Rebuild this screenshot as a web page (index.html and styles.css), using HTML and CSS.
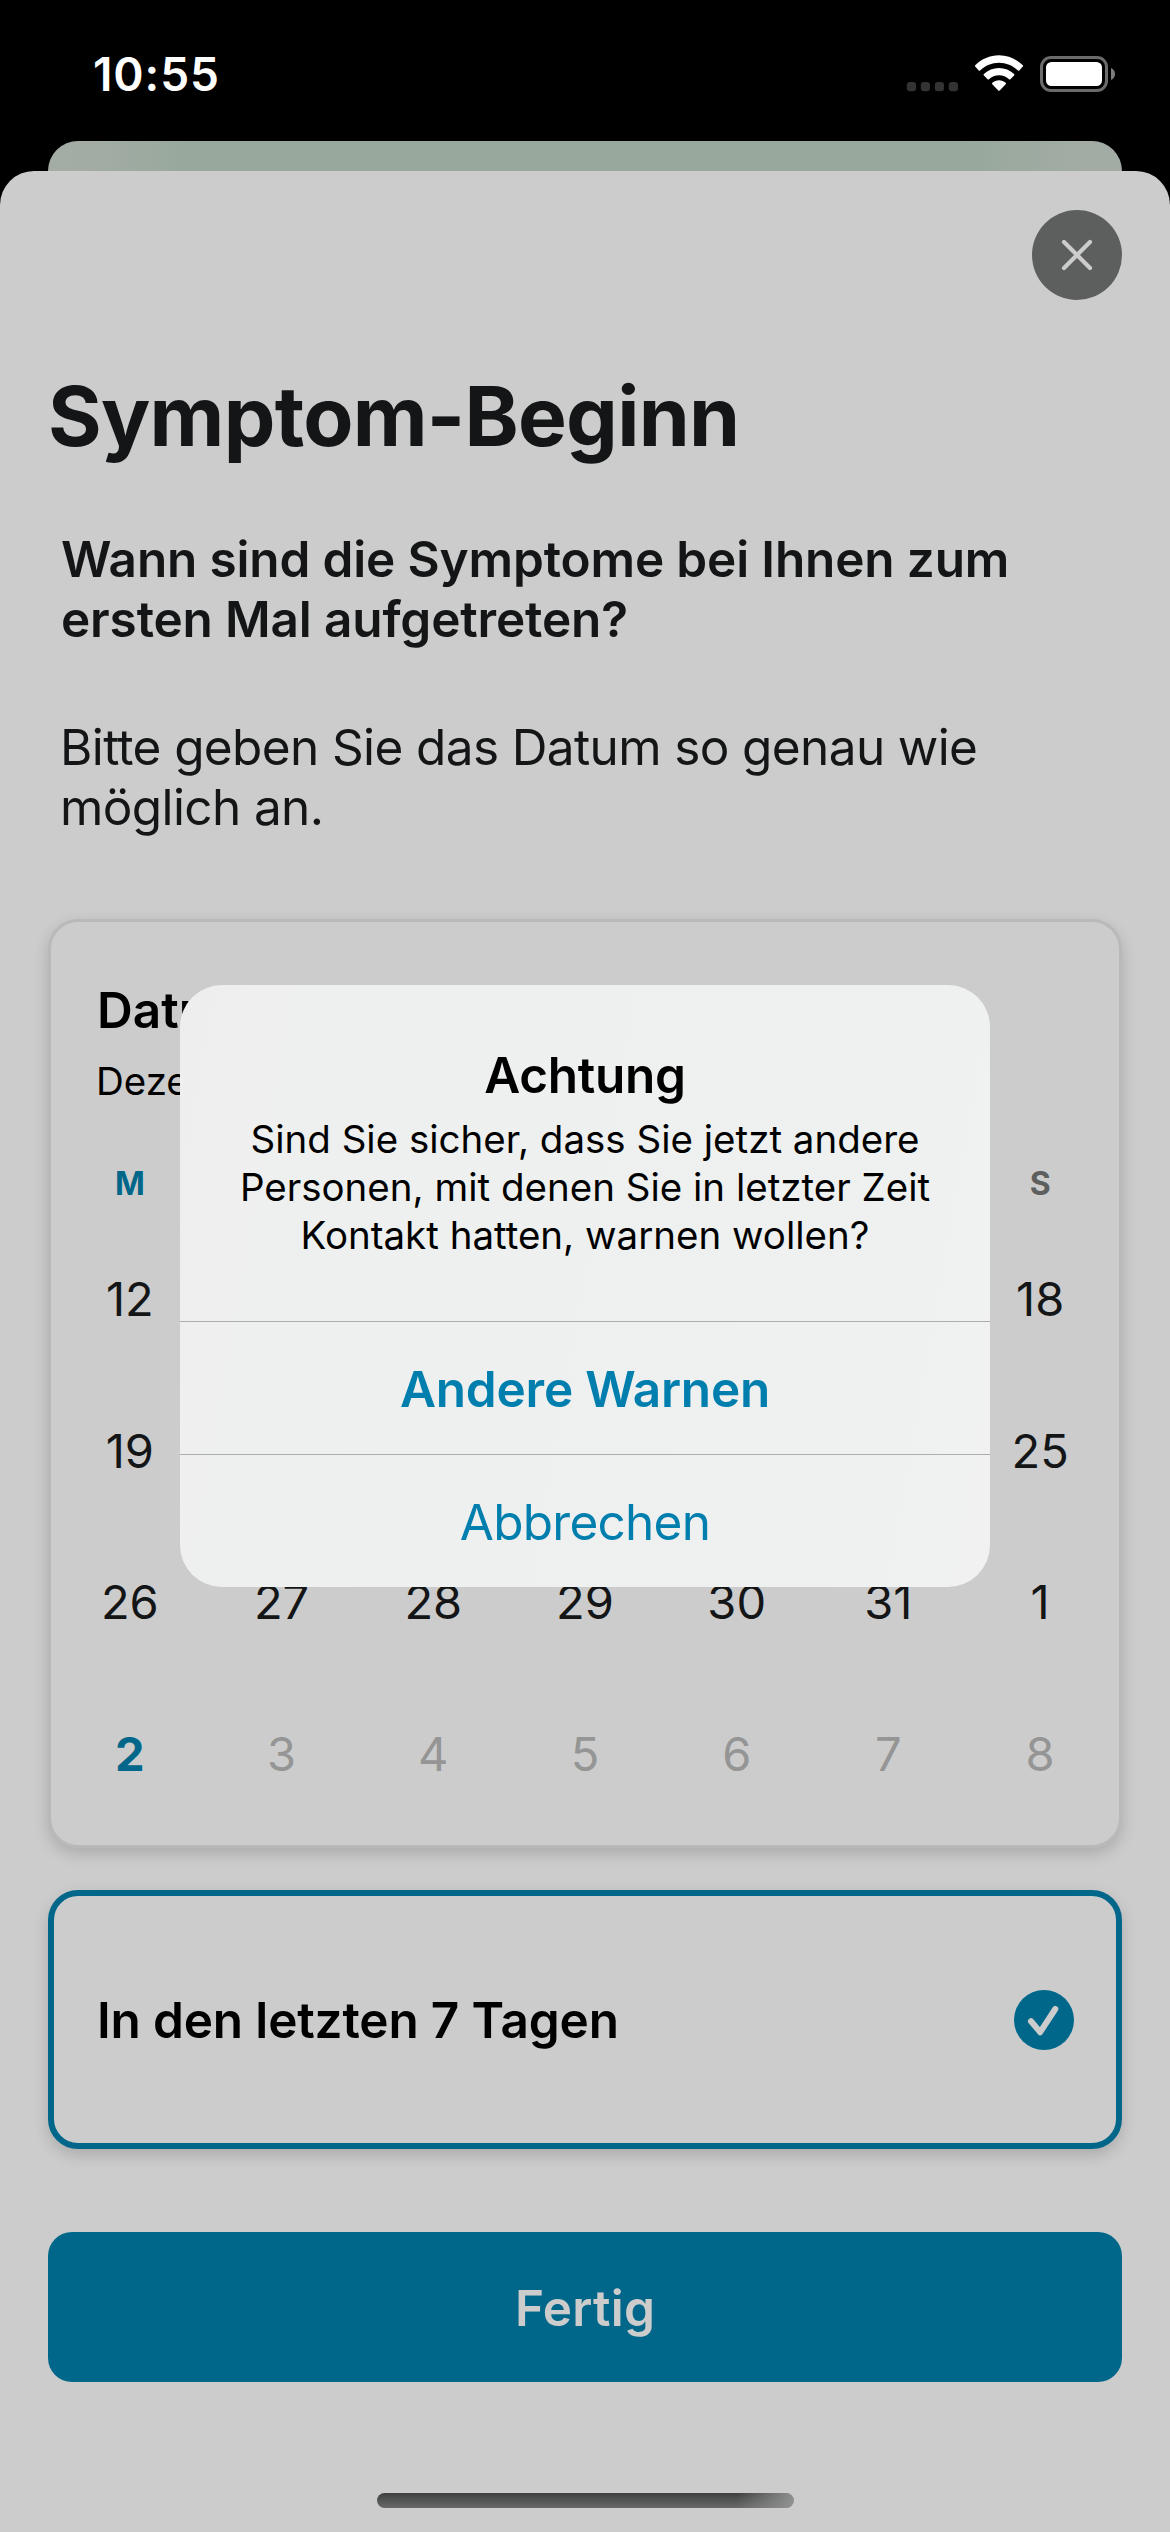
FILE: index.html
```html
<!DOCTYPE html>
<html lang="de">
<head>
<meta charset="utf-8">
<title>Symptom-Beginn</title>
<link rel="stylesheet" href="styles.css">
</head>
<body>
<div class="screen">
  <header class="status-bar">
    <span class="time">10:55</span>
    <div class="status-icons">
      <svg class="signal" width="52" height="10" viewBox="0 0 52 10" fill="#333">
        <rect x="0.8" y="0" width="9.2" height="9.2" rx="3"/>
        <rect x="14.8" y="0" width="9.2" height="9.2" rx="3"/>
        <rect x="28.8" y="0" width="9.2" height="9.2" rx="3"/>
        <rect x="42.8" y="0" width="9.2" height="9.2" rx="3"/>
      </svg>
      <svg class="wifi" width="50" height="37" viewBox="0 0 50 37" fill="#fff">
        <path d="M25 .3C34 .3 42.500 4 48.800 10.200a1 1 0 0 1 0 1.400L45.300 15.400a1 1 0 0 1-1.400 0C38.800 10.500 32 7.700 25 7.700S11.200 10.500 6.100 15.400a1 1 0 0 1-1.400 0L1.200 11.600a1 1 0 0 1 0-1.400C7.500 4 16 .3 25 .3Z"/>
        <path d="M25 12.900c5.700 0 11 2.200 15.100 6a1 1 0 0 1 0 1.500l-3.700 3.800a1 1 0 0 1-1.400 0C32.300 21.700 28.800 20.300 25 20.300s-7.300 1.400-10 3.900a1 1 0 0 1-1.400 0l-3.700-3.800a1 1 0 0 1 0-1.500c4.100-3.800 9.400-6 15.100-6Z"/>
        <path d="M25 25.300c2.500 0 4.800.9 6.600 2.400a1 1 0 0 1 .1 1.500l-6 6.200a1 1 0 0 1-1.400 0l-6-6.200a1 1 0 0 1 .1-1.500c1.800-1.500 4.100-2.400 6.600-2.400Z"/>
      </svg>
      <svg class="battery" width="76" height="36" viewBox="0 0 76 36">
        <rect x="1.500" y="1.500" width="65" height="33" rx="9.500" fill="none" stroke="#6b6b6b" stroke-width="3"/>
        <rect x="6" y="6" width="56" height="24" rx="5.500" fill="#fff"/>
        <path d="M71 12c2.400 1 4 3.300 4 6s-1.600 5-4 6Z" fill="#7d7d7d"/>
      </svg>
    </div>
  </header>

  <div class="sheet-behind"></div>

  <main class="sheet">
    <button class="close" aria-label="Schließen">
      <svg width="90" height="90" viewBox="0 0 90 90">
        <path d="M32 32 58 58M58 32 32 58" stroke="#ccc" stroke-width="4.200" stroke-linecap="round"/>
      </svg>
    </button>

    <h1 class="title">Symptom-Beginn</h1>
    <p class="question">Wann sind die Symptome bei Ihnen zum<br>ersten Mal aufgetreten?</p>
    <p class="hint">Bitte geben Sie das Datum so genau wie<br>möglich an.</p>

    <section class="calendar">
      <h2 class="calendar-title">Datu</h2>
      <p class="calendar-month">Deze</p>
      <div class="weekdays">
        <span class="current">M</span><span class="last">S</span>
      </div>
      <div class="days">
        <span>12</span><span class="last">18</span>
        <span>19</span><span class="last">25</span>
        <span>26</span><span>27</span><span>28</span><span>29</span><span>30</span><span>31</span><span>1</span>
        <span class="today">2</span><span class="off">3</span><span class="off">4</span><span class="off">5</span><span class="off">6</span><span class="off">7</span><span class="off">8</span>
      </div>
    </section>

    <section class="option">
      <span>In den letzten 7 Tagen</span>
      <svg width="60" height="60" viewBox="0 0 60 60">
        <circle cx="30" cy="30" r="30" fill="#00678b"/>
        <path d="M17 31.300 26.200 42.200 41.300 19" fill="none" stroke="#ccc" stroke-width="6" stroke-linecap="round" stroke-linejoin="round"/>
      </svg>
    </section>

    <button class="done">Fertig</button>
    <div class="home-bar"></div>
  </main>

  <div class="alert" role="alertdialog">
    <div class="alert-message">
      <h2>Achtung</h2>
      <p>Sind Sie sicher, dass Sie jetzt andere<br>Personen, mit denen Sie in letzter Zeit<br>Kontakt hatten, warnen wollen?</p>
    </div>
    <button class="alert-action primary">Andere Warnen</button>
    <button class="alert-action">Abbrechen</button>
  </div>
</div>
</body>
</html>
```

FILE: styles.css
```css
* {
  box-sizing: border-box;
  margin: 0;
  padding: 0;
}

body {
  background: #000;
  font-family: Inter, "Liberation Sans", sans-serif;
  font-size: 49.5px;
  line-height: 60px;
  color: #131516;
}

button {
  border: 0;
  background: none;
  font: inherit;
  color: inherit;
}

svg {
  display: block;
}

.screen {
  position: relative;
  display: flex;
  flex-direction: column;
  width: 1170px;
  height: 2532px;
  overflow: hidden;
}

.status-bar {
  display: flex;
  justify-content: space-between;
  align-items: flex-start;
  height: 141px;
  padding: 49px 54px 0 93px;
  color: #fff;
}

.time {
  font-size: 46px;
  font-weight: 600;
  line-height: 50px;
  letter-spacing: 0.9px;
}

.status-icons {
  display: flex;
  align-items: flex-end;
  height: 43px;
}

.wifi {
  margin: 0 16px;
}

.sheet-behind {
  height: 30px;
  margin: 0 48px;
  border-radius: 30px 30px 0 0;
  background: linear-gradient(90deg, #a3aca5 0, #a2aca4 50px, #98a89c 140px, #98a89c 920px, #a2aca4 1030px);
}

.sheet {
  display: flex;
  flex: 1;
  flex-direction: column;
  padding: 39px 48px 0;
  border-radius: 34px 34px 0 0;
  background: #ccc;
}

.close {
  align-self: flex-end;
  width: 90px;
  height: 90px;
  border-radius: 50%;
  background: #5d5f5e;
}

.title {
  margin-top: 67px;
  font-size: 82px;
  font-weight: 700;
  line-height: 100px;
  letter-spacing: -0.73px;
}

.question {
  margin: 62px 0 0 13px;
  font-weight: 600;
  letter-spacing: -0.15px;
  white-space: nowrap;
}

.hint {
  margin: 68px 0 0 12px;
  letter-spacing: -0.62px;
  white-space: nowrap;
}

.calendar {
  height: 929px;
  margin-top: 82px;
  padding-top: 58px;
  border: 3px solid #b9b9b9;
  border-radius: 30px;
  background: #ccc;
  box-shadow: 0 6px 15px rgba(0, 0, 0, 0.16);
}

.calendar-title {
  margin-left: 46px;
  font-size: 49.5px;
  font-weight: 600;
  color: #000;
}

.calendar-month {
  margin: 17px 0 0 45px;
  font-size: 38.5px;
  line-height: 48px;
  color: #000;
}

.weekdays,
.days {
  display: grid;
  grid-template-columns: repeat(7, 1fr);
  padding: 0 3px;
  text-align: center;
}

.weekdays {
  margin-top: 59px;
  font-size: 32px;
  font-weight: 700;
  line-height: 40px;
  color: #5d5f5e;
}

.last {
  grid-column: 7;
}

.days {
  grid-auto-rows: 151.7px;
  margin-top: 19px;
  font-size: 47px;
  line-height: 151.7px;
}

.current,
.today {
  color: #00678b;
}

.today {
  font-weight: 700;
}

.off {
  color: #949594;
}

.option {
  display: flex;
  align-items: center;
  justify-content: space-between;
  height: 259px;
  margin-top: 42px;
  padding: 0 42px 0 43px;
  border: 6px solid #00678b;
  border-radius: 30px;
  background: #ccc;
  box-shadow: 0 6px 15px rgba(0, 0, 0, 0.16);
  font-weight: 600;
  letter-spacing: -0.15px;
  color: #000;
}

.done {
  height: 150px;
  margin-top: 83px;
  padding-top: 2px;
  border-radius: 24px;
  background: #00678b;
  font-weight: 600;
  letter-spacing: 0.25px;
  color: #ccc;
}

.home-bar {
  align-self: center;
  width: 417px;
  height: 15px;
  margin-top: 111px;
  border-radius: 8px;
  background:
    linear-gradient(100deg, rgba(145, 147, 146, 0) 86%, #919392 100%),
    linear-gradient(#3f4140, #686a69);
}

.alert {
  position: absolute;
  top: 985px;
  left: 180px;
  display: flex;
  flex-direction: column;
  width: 810px;
  height: 602px;
  overflow: hidden;
  border-radius: 42px;
  background: linear-gradient(100deg, #efeeee 0, #eef0ef 16%, #eff1f0 85%, #f1f1f2 100%);
  text-align: center;
}

.alert-message {
  height: 336px;
  padding-top: 60px;
  color: #000;
}

.alert-message h2 {
  font-size: 49.5px;
  font-weight: 600;
  letter-spacing: -0.25px;
}

.alert-message p {
  margin-top: 10px;
  font-size: 38.5px;
  line-height: 48px;
  white-space: nowrap;
}

.alert-action {
  height: 133px;
  padding-top: 1px;
  border-top: 1px solid #adafae;
  letter-spacing: -0.73px;
  color: #007fae;
}

.alert-action.primary {
  font-weight: 600;
  letter-spacing: -0.22px;
}
```
